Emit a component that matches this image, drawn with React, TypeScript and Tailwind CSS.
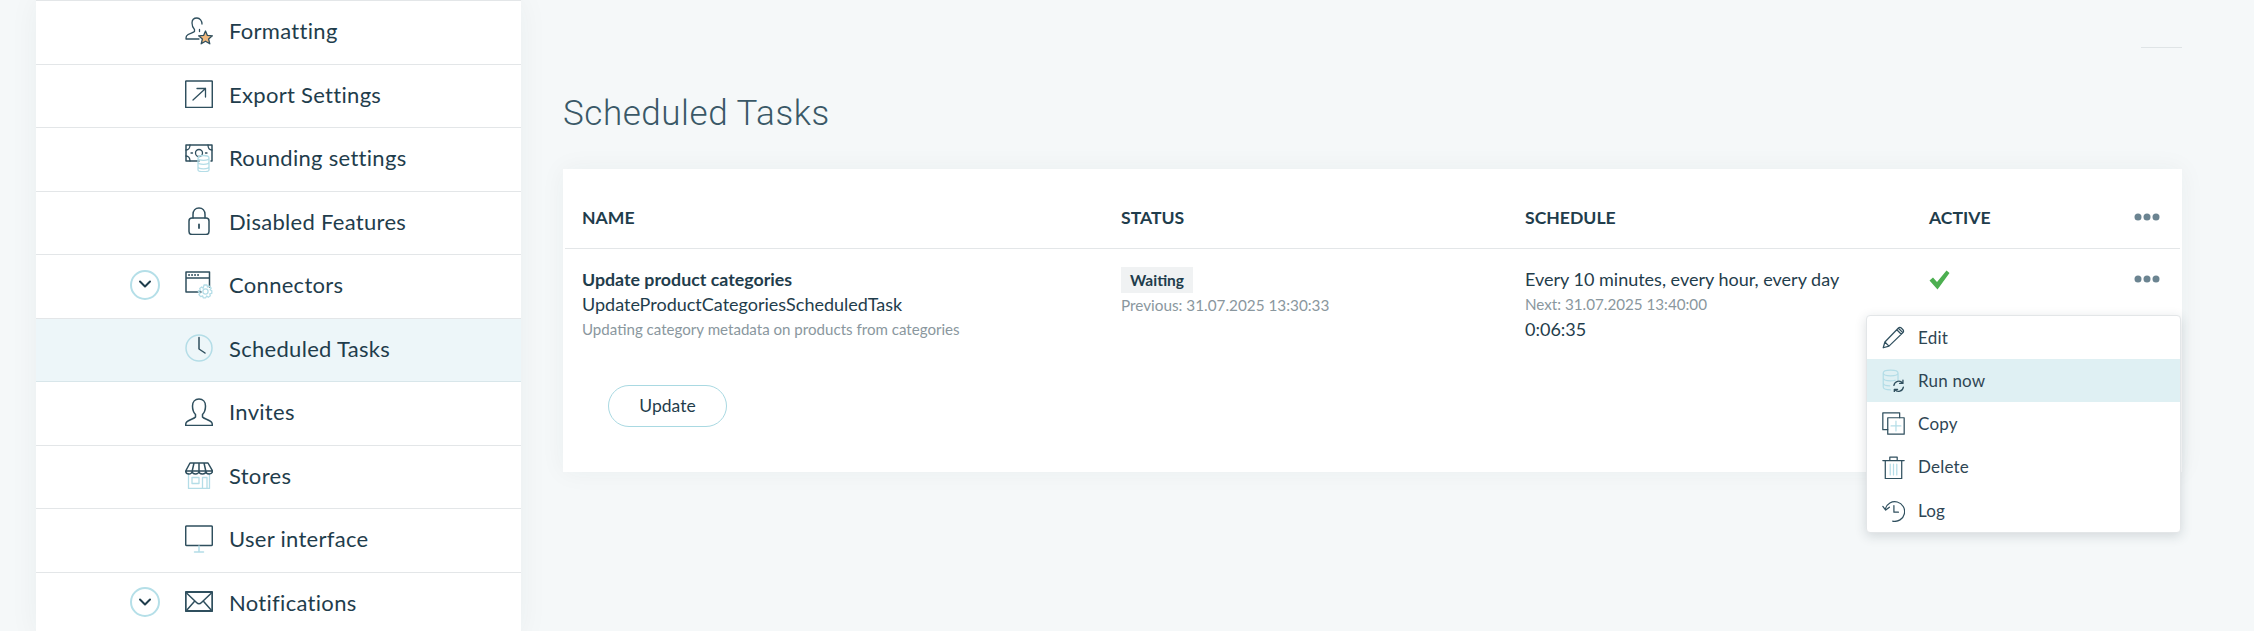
import React from "react";

const D = "#2f4f5e";
const L = "#b4dde7";

const base = { fill: "none", strokeWidth: 1.3, strokeLinecap: "round" as const, strokeLinejoin: "round" as const };

const Ic = ({ children, s = 28 }: { children: React.ReactNode; s?: number }) => (
  <svg width={s} height={s} viewBox="0 0 28 28" {...base} className="block shrink-0">
    {children}
  </svg>
);

const Formatting = () => (
  <Ic>
    <path stroke={D} d="M12 1c-3 0-5 2-5 5 0 3 1 5 2.500 6.500v2C8 16 3 16.500 1.500 19c-.3.800-.5 1.500-.5 3h13M14.500 12.500V14.500M17 7c0-3-2-6-5-6" />
    <path stroke={D} fill="#f0b77c" d="M20.500 14l1.900 4.400 5 .4-3.800 3.200 1.200 4.800-4.300-2.600-4.300 2.600 1.200-4.800-3.800-3.200 5-.4z" />
  </Ic>
);
const Export = () => (
  <Ic>
    <rect stroke={D} x="0.700" y="1" width="26.600" height="26.600" rx="0.500" strokeWidth="1.500" />
    <path stroke={D} d="M8 20L20.500 8.500M12 8.500h8.500V17" />
  </Ic>
);
const Money = () => (
  <Ic>
    <path stroke={D} d="M14 17H1V1h26v16h-1" strokeWidth="1.500" />
    <path stroke={D} d="M1 6c2.500 0 4-2 4-5M27 6c-2.500 0-4-2-4-5M1 12c2.500 0 4 2 4 5" />
    <circle stroke={D} cx="14" cy="9" r="3.500" />
    <path stroke={D} d="M6 9h1.500M20.500 9H22" />
    <path stroke={L} d="M13 14c0-1.500 2.500-2.500 5.500-2.500s5.500 1 5.500 2.500v12c0 1.500-2.500 1.700-5.500 1.700S13 27.500 13 26zM13 14c0 1.500 2.500 2.300 5.500 2.300s5.500-.8 5.500-2.300M13 18c0 1.500 2.500 2.300 5.500 2.300s5.500-.8 5.500-2.300M13 22.500c0 1.500 2.500 2.300 5.500 2.300s5.500-.8 5.500-2.300" />
  </Ic>
);
const Lock = () => (
  <Ic>
    <path stroke={D} strokeWidth="1.500" d="M8 11V7.500C8 3.500 10.500 1 14 1s6 2.500 6 6.500V11" />
    <rect stroke={D} strokeWidth="1.500" x="4" y="11" width="20" height="16.500" rx="3" />
    <path stroke={D} strokeWidth="1.800" d="M14 17.500v3.500" />
  </Ic>
);
const Conn = () => (
  <Ic>
    <path stroke={D} strokeWidth="1.500" d="M16 21H1V1h23.500v15M1 7h23.500" />
    <path stroke={D} strokeWidth="1.800" d="M4 4h.1M7 4h.1M10 4h.1M13 4h.1" />
    <circle stroke={L} cx="20.500" cy="20.500" r="2.600" />
    <path stroke={L} d="M19 14h3l.5 2 2-.8 1.700 2-1.200 1.600 1.800 1v2.500l-2 .5.500 2-2 1.500-1.600-1.300-1 1.800h-2.500l-.5-2-2 .8-1.800-2 1.300-1.600-1.800-1V20l2-.5-.7-2 2-1.500 1.500 1.200z" />
  </Ic>
);
const Clock = () => (
  <Ic>
    <circle stroke={L} strokeWidth="1.500" cx="14" cy="14" r="13" />
    <path stroke={D} strokeWidth="1.500" d="M14 3.500V15l6 4" />
  </Ic>
);
const Person = () => (
  <Ic>
    <path stroke={D} strokeWidth="1.500" d="M14 1c-4 0-6.500 3-6.500 7 0 4 1.500 7 3 8.500v2.500C9 21 2.500 22 1 25c-.3.800-.3 1.500-.3 2.500h26.600c0-1 0-1.700-.3-2.500-1.500-3-8-4-9.500-6v-2.500c1.500-1.500 3-4.500 3-8.500S18 1 14 1z" />
  </Ic>
);
const Store = () => (
  <Ic>
    <path stroke={L} d="M3.500 13v14.500h21V13M7 16.500h7v6H7zM17.500 27.500v-11h4.500v11" />
    <path stroke={D} strokeWidth="1.500" d="M5 2h18l4.500 8H.7zM.7 10c0 4 6.500 4 6.500 0 0 4 6.800 4 6.800 0 0 4 6.800 4 6.800 0 0 4 6.700 4 6.700 0M7.200 10L9 2M14 10V2M20.800 10L19 2" />
  </Ic>
);
const Monitor = () => (
  <Ic>
    <rect stroke={D} strokeWidth="1.500" x="0.700" y="1" width="26.600" height="19.500" rx="1" />
    <path stroke={L} strokeWidth="1.500" d="M14 21v6M9.500 27h9" />
  </Ic>
);
const Mail = () => (
  <Ic>
    <rect stroke={D} strokeWidth="1.800" x="0.800" y="4" width="26.400" height="19" />
    <path stroke={D} strokeWidth="1.500" d="M1 4.500l10.500 10c1.500 1.500 3.500 1.500 5 0L27 4.500M1 23l8.800-10M27 23l-8.800-10" />
  </Ic>
);

const Pencil = () => (
  <Ic s={23}>
    <path stroke={D} strokeWidth="1.500" d="M1.500 26.500l2-7L20 2.500c1-1 2.500-1 3.500 0l2 2c1 1 1 2.500 0 3.500L8.500 24.500zM3.500 19.500l5 5M18 4.500l5.500 5.500M20 2.800l5.300 5.300" />
  </Ic>
);
const RunNow = () => (
  <Ic s={23}>
    <path stroke={L} strokeWidth="1.500" d="M1.500 5c0-2 4-3.500 9-3.500s9 1.500 9 3.500v8M1.500 5v17c0 2 3.500 3.500 9 3.500M1.500 5c0 2 4 3.500 9 3.500s9-1.500 9-3.500M1.500 11c0 2 4 3.500 9 3.500 2 0 4-.2 5.500-.8M1.500 17c0 2 3.500 3.500 8 3.500" />
    <path stroke={D} strokeWidth="1.600" d="M14.500 20a6 6 0 0 1 10.500-3M26 22a6 6 0 0 1-10.500 3M25.500 13.500V17.500H21.500M15 28.500V24.800h4" />
  </Ic>
);
const Copy = () => (
  <Ic s={23}>
    <path stroke={D} strokeWidth="1.500" d="M7 21.500H1V1h20.500v6" />
    <rect stroke={D} strokeWidth="1.500" x="7" y="7" width="20" height="20" />
    <path stroke={L} strokeWidth="1.500" d="M17 11v12M11 17h12" />
  </Ic>
);
const Trash = () => (
  <Ic s={23}>
    <path stroke={D} strokeWidth="1.500" d="M4 6.500V27.500h20V6.500M1 5.500h26M9.500 5V1.500h9V5" />
    <path stroke={L} strokeWidth="1.500" d="M10 10v13M14 10v13M18 10v13" />
  </Ic>
);
const Log = () => (
  <Ic s={23}>
    <path stroke={D} strokeWidth="1.500" d="M4 12a12 12 0 1 1 9 15M1 9l3.500 4.500L9 10M14.500 8v8H20" />
  </Ic>
);

const Chevron = () => (
  <div className="w-[30px] h-[30px] rounded-full border-2 border-[#b5dfe8] flex items-center justify-center">
    <svg width="14" height="9" viewBox="0 0 14 9" fill="none" stroke="#1f3d4c" strokeWidth="2" strokeLinecap="round" strokeLinejoin="round">
      <path d="M2 1.500l5 5 5-5" />
    </svg>
  </div>
);

const Dots = () => (
  <svg width="26" height="8" viewBox="0 0 26 8" className="block">
    <circle cx="4" cy="4" r="3.500" fill="#6b8491" />
    <circle cx="13" cy="4" r="3.500" fill="#6b8491" />
    <circle cx="22" cy="4" r="3.500" fill="#6b8491" />
  </svg>
);

const rows = [
  { label: "Formatting", icon: <Formatting /> },
  { label: "Export Settings", icon: <Export /> },
  { label: "Rounding settings", icon: <Money /> },
  { label: "Disabled Features", icon: <Lock /> },
  { label: "Connectors", icon: <Conn />, chevron: true },
  { label: "Scheduled Tasks", icon: <Clock />, active: true },
  { label: "Invites", icon: <Person /> },
  { label: "Stores", icon: <Store /> },
  { label: "User interface", icon: <Monitor /> },
  { label: "Notifications", icon: <Mail />, chevron: true },
];

const menu = [
  { label: "Edit", icon: <Pencil /> },
  { label: "Run now", icon: <RunNow />, active: true },
  { label: "Copy", icon: <Copy /> },
  { label: "Delete", icon: <Trash /> },
  { label: "Log", icon: <Log /> },
];

export default function App() {
  return (
    <div className="w-[2254px] h-[631px] overflow-hidden flex bg-[#f5f8f9] pl-[36px] text-[#1f3d4c] font-['Lato','Noto_Sans',sans-serif]">
      <aside className="w-[485px] shrink-0 bg-white border-t border-[#e3e6e8] shadow-[0_0_28px_rgba(30,50,60,0.05)] self-start">
        {rows.map((r) => (
          <div
            key={r.label}
            className={
              r.active
                ? "h-[63.5px] flex items-center pl-[94px] pb-[3px] border-b border-[#d8e6ea] bg-[#edf6f9]"
                : "h-[63.5px] flex items-center pl-[94px] pb-[3px] border-b border-[#e3e6e8]"
            }
          >
            <div className="w-[30px] shrink-0">{r.chevron ? <Chevron /> : null}</div>
            <div className="ml-[25px]">{r.icon}</div>
            <span className="ml-[16px] text-[22px] tracking-[0.3px]">{r.label}</span>
          </div>
        ))}
      </aside>

      <main className="flex-1 pl-[42px] pr-[72px] pt-[47px]">
        <div className="w-[41px] h-px bg-[#dfe4e6] ml-auto" />
        <h1 className="mt-[42px] h-[48px] leading-[48px] text-[35px] font-light font-['Roboto',sans-serif] text-[#3a5867] tracking-[0.55px]">
          Scheduled Tasks
        </h1>
        <section className="relative mt-[31px] bg-white shadow-[0_0_24px_rgba(30,50,60,0.05)] pb-[45px]">
          <div className="mx-[2px] h-[80px] pt-[20px] border-b border-[#e3e6e8] grid grid-cols-[539px_404px_404px_1fr] items-center pl-[17px] pr-[20px] font-bold text-[17.6px] uppercase">
            <span>Name</span>
            <span>Status</span>
            <span>Schedule</span>
            <span className="flex items-center justify-between">
              Active
              <span className="-mt-[2px]">
                <Dots />
              </span>
            </span>
          </div>
          <div className="mx-[2px] pt-[18px] grid grid-cols-[539px_404px_404px_1fr] pl-[17px] pr-[20px] text-[18px] leading-[25px]">
            <div>
              <div className="font-bold text-[17.8px]">Update product categories</div>
              <div>UpdateProductCategoriesScheduledTask</div>
              <div className="text-[15.1px] text-[#8a979e]">Updating category metadata on products from categories</div>
            </div>
            <div>
              <span className="inline-block h-[26px] px-[9px] bg-[#f0f2f3] font-bold text-[15.5px] leading-[26px]">Waiting</span>
              <div className="text-[15.3px] text-[#8a979e]">Previous: 31.07.2025 13:30:33</div>
            </div>
            <div>
              <div>Every 10 minutes, every hour, every day</div>
              <div className="text-[15.2px] text-[#8a979e]">Next: 31.07.2025 13:40:00</div>
              <div className="text-[18px]">0:06:35</div>
            </div>
            <div className="flex items-start justify-between">
              <svg width="21" height="20" viewBox="0 0 21 20" className="block mt-[3px]">
                <path d="M0.500 10.500L4 7.500L8 12L17.500 0.500L20.500 3L8.500 19.500z" fill="#4caf50" />
              </svg>
              <div className="mt-[8px]">
                <Dots />
              </div>
            </div>
          </div>
          <button className="ml-[45px] mt-[43px] w-[119px] h-[42px] rounded-full border border-[#a9d9e2] bg-white text-[17.5px] text-[#1f3d4c]">
            Update
          </button>

          <div className="absolute left-[1303px] top-[146px] w-[315px] h-[218px] bg-white rounded-[4px] border border-[#e3e6e8] shadow-[0_3px_12px_rgba(30,50,60,0.16)]">
            {menu.map((m) => (
              <div
                key={m.label}
                className={
                  m.active
                    ? "h-[43.2px] flex items-center pl-[15px] bg-[#dff0f3]"
                    : "h-[43.2px] flex items-center pl-[15px]"
                }
              >
                {m.icon}
                <span className="ml-[13px] text-[17px] text-[#2f4654] tracking-[0.2px]">{m.label}</span>
              </div>
            ))}
          </div>
        </section>
      </main>
    </div>
  );
}
